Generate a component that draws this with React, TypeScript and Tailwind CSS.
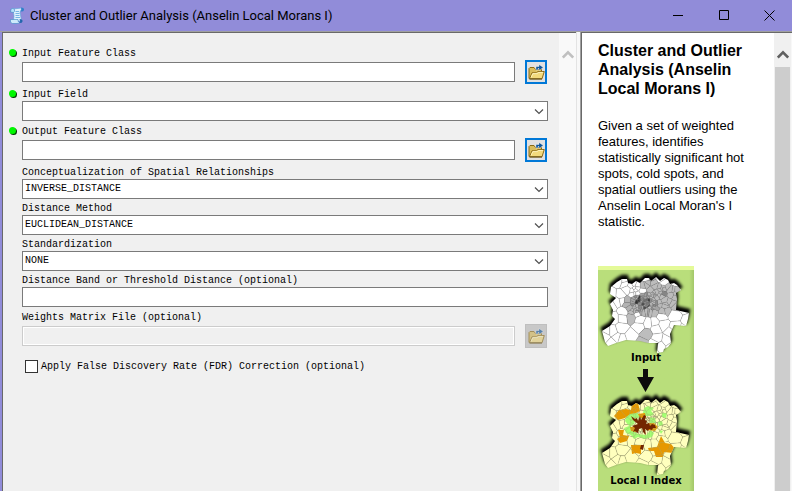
import type { ReactNode } from "react";

type Point = [number, number];

const OUTLINE: Point[] = [
  [13, 21], [19, 16], [24, 13], [29, 13], [30, 17], [34, 18], [38, 15], [42, 17], [47, 12], [51, 12], [53, 15], [58, 11],
  [62, 15], [66, 12], [70, 14], [72, 18], [76, 17], [79, 19], [83, 24], [78, 27], [79, 33], [78, 44], [91, 47],
  [90, 53], [88, 60], [76, 59], [72, 68], [73, 77], [70, 81], [66, 83], [65, 86], [59, 87], [60, 77], [50, 77],
  [42, 75], [28, 74], [18, 77], [10, 80], [7, 76], [4, 65], [12, 60], [17, 53], [14, 50], [15, 44], [12, 38],
  [18, 32], [12, 28],
];

const toPoints = (poly: Point[]) => poly.map(([x, y]) => `${x.toFixed(1)},${y.toFixed(1)}`).join(" ");

function makeSeeds(): Point[] {
  let state = 29;
  const random = () => {
    state = (state * 16807) % 2147483647;
    return state / 2147483647;
  };
  const seeds: Point[] = [];
  for (let y = 12; y < 88; y += 9) {
    for (let x = 2; x < 92; x += 10) seeds.push([x + random() * 10, y + random() * 9]);
  }
  for (let i = 0; i < 60; i++) seeds.push([26 + random() * 52, 16 + random() * 32]);
  for (let i = 0; i < 60; i++) seeds.push([35 + random() * 22, 27 + random() * 19]);
  return seeds;
}

function makeCell(seed: Point, seeds: Point[]): Point[] {
  let poly: Point[] = [[0, 8], [96, 8], [96, 90], [0, 90]];
  for (const other of seeds) {
    if (other === seed) continue;
    const nx = other[0] - seed[0];
    const ny = other[1] - seed[1];
    const limit = (nx * (other[0] + seed[0]) + ny * (other[1] + seed[1])) / 2;
    const side = (p: Point) => p[0] * nx + p[1] * ny - limit;
    const next: Point[] = [];
    poly.forEach((a, i) => {
      const b = poly[(i + 1) % poly.length];
      const sa = side(a);
      const sb = side(b);
      if (sa <= 0) next.push(a);
      if (sa * sb < 0) {
        const t = sa / (sa - sb);
        next.push([a[0] + t * (b[0] - a[0]), a[1] + t * (b[1] - a[1])]);
      }
    });
    poly = next;
  }
  return poly;
}

const SEEDS = makeSeeds();
const CELLS = SEEDS.map((seed) => ({ seed, points: toPoints(makeCell(seed, SEEDS)) }));

const inside = ([x, y]: Point, cx: number, cy: number, rx: number, ry: number) =>
  ((x - cx) / rx) ** 2 + ((y - cy) / ry) ** 2 < 1;

function grayFill(p: Point, i: number) {
  if (inside(p, 45, 37, 7, 7)) return ["#4d4d4d", "#8a8a8a", "#6b6b6b", "#a3a3a3", "#333333"][i % 5];
  if (inside(p, 47, 38, 15, 10)) return ["#a3a3a3", "#8c8c8c", "#b8b8b8", "#bcbcbc"][i % 4];
  if (inside(p, 67, 27, 3, 3)) return "#858585";
  if (inside(p, 33, 37, 7, 7)) return "#b3b3b3";
  if (inside(p, 55, 21, 10, 10) || inside(p, 69, 33, 12, 14)) return "#bcbcbc";
  if (inside(p, 32, 53, 7, 9) || inside(p, 46, 69, 6, 9)) return "#bdbdbd";
  return "#ffffff";
}

const HOT = [
  "M16 28 L21 22 L28 21 L33 22 L34 16 L40 15 L42 23 L38 25 L32 26 L27 30 L20 32Z",
  "M20 42 L26 42 L25 47 L31 48 L29 53 L22 55 L19 51 L22 49Z",
  "M33 57 L43 57 L43 66 L38 65 L34 66Z",
  "M50 60 L59 59 L63 48 L67 55 L73 56 L78 62 L75 65 L66 64 L65 69 L58 69 L56 63 L51 63Z",
];
const COOL = [
  "M29 27 L34 24 L40 25 L42 29 L38 31 L36 36 L33 38 L35 43 L40 46 L48 47 L53 42 L56 45 L54 49 L47 51 L40 49 L36 51 L33 47 L28 45 L26 40 L31 38 L27 33Z",
  "M46 20 L50 18 L56 20 L53 23 L56 26 L53 28 L47 28 L45 25Z",
  "M64 25 L69 25 L68 30 L64 29Z M60 34 L64 33 L65 37 L61 38Z M61 42 L65 43 L63 46Z M52 29 L57 30 L58 35 L52 35Z",
];
const WARM = "M40 26 L47 25 L48 30 L42 30Z M50 35 L56 35 L60 39 L57 43 L50 42Z M32 39 L40 39 L38 44 L33 43Z";
const CORE =
  "M33 28 L37 31 L39 30 L40 33 L42 28 L43 32 L46 27 L48 28 L47 32 L49 33 L48 36 L51 35 L52 38 L54 36 L57 37 L58 40 L55 40 L54 42 L51 41 L50 43 L47 41 L48 47 L45 44 L44 40 L41 41 L40 45 L37 43 L35 44 L37 40 L34 38 L40 36 L35 32Z M43 57 L46 57 L45 62 L42 61Z";

function RegionMap({ id, kind }: { id: string; kind: "input" | "index" }) {
  const input = kind === "input";
  return (
    <svg className="block h-[90px] w-24 overflow-visible" viewBox="0 0 96 90" aria-hidden="true">
      <defs>
        <clipPath id={id}>
          <polygon points={toPoints(OUTLINE)} />
        </clipPath>
        <filter id={`${id}-shadow`} x="-10%" y="-10%" width="120%" height="120%">
          <feGaussianBlur stdDeviation="1.6" />
        </filter>
      </defs>
      <polygon
        points={toPoints(OUTLINE)}
        transform="translate(0 -3)"
        fill="#000"
        stroke="#000"
        strokeWidth="2.5"
        filter={`url(#${id}-shadow)`}
      />
      <g clipPath={`url(#${id})`}>
        {CELLS.map((cell, i) => (
          <polygon key={i} points={cell.points} fill={input ? grayFill(cell.seed, i) : "#ffffbe"} />
        ))}
        {!input && COOL.map((d) => <path key={d} d={d} fill="#a3ff73" />)}
        {!input && HOT.map((d) => <path key={d} d={d} fill="#e69800" />)}
        {!input && <path d={WARM} fill="#e69800" />}
        {CELLS.map((cell, i) => (
          <polygon
            key={i}
            points={cell.points}
            fill="none"
            stroke={input ? "#9c9c9c" : "#a8a878"}
            strokeWidth="0.4"
            strokeOpacity="0.5"
          />
        ))}
        {!input && <path d={CORE} fill="#732600" />}
      </g>
    </svg>
  );
}

function ScrollIcon() {
  return (
    <svg className="h-[17px] w-4 shrink-0" viewBox="0 0 16 17" aria-hidden="true">
      <path d="M4 2 L13 1 L11 5 L12.500 14 H4.500 L5 9Z" fill="#dff1fd" stroke="#5aa3d8" strokeWidth=".6" />
      <path d="M2 2 Q4 .5 5.500 2.500 Q6 4.500 4.500 5.500 L1.500 5Z" fill="#b5e0fa" stroke="#3d86c4" strokeWidth=".6" />
      <path d="M12 .5 Q15.500 .5 15 3 Q14.500 5 11.500 4.500 Q13 3 12 .5Z" fill="#2f80c8" />
      <path d="M1.500 12.500 H9 Q8.500 15 11 15.500 Q10 16.500 8 16.500 H3.500 Q.5 16 1.500 12.500Z" fill="#cdeafb" stroke="#3d86c4" strokeWidth=".6" />
      <path d="M10.500 12 Q14 12 13.500 14.500 Q13 16.500 10 16 Q12 15 10.500 12Z" fill="#2266ad" />
      <path d="M6.500 4.500 H10 M6.500 6.500 H10.500 M6.500 8.500 H10.500 M6.500 10.500 H11" stroke="#6aade0" strokeWidth=".9" />
    </svg>
  );
}

function FolderIcon() {
  return (
    <svg className="h-4 w-[17px] shrink-0" viewBox="0 0 17 16" aria-hidden="true">
      <path d="M1 14.500 V4.500 L2 3.500 H6 L7.500 5.500 H13.500 V8" fill="#d9bd5c" stroke="#8a6a14" />
      <path d="M1.500 14.800 L4 8.800 H8.500 L10 7.500 H16.300 L14 14.800Z" fill="#f2da7c" stroke="#8a6a14" />
      <path d="M3 13.500 L4.800 9.600 H9 L10.500 8.400 H15" fill="none" stroke="#fff6c4" strokeWidth=".9" />
      <path d="M1.500 15 H14" stroke="#5f480c" />
      <path d="M8 6 V2.500 H11 V.4 L15.300 3.500 L11 6.600 V4.500 H10 V6Z" fill="#0f5597" stroke="#fff" strokeWidth=".4" />
    </svg>
  );
}

function ChevronUp({ className }: { className: string }) {
  return (
    <svg className={className} viewBox="0 0 12 9" aria-hidden="true">
      <path d="M.8 7.500 L6 2.300 L11.200 7.500" fill="none" stroke="currentColor" strokeWidth="2.600" />
    </svg>
  );
}

function Field({ id, label, required, children }: { id: string; label: string; required?: boolean; children: ReactNode }) {
  return (
    <div className="grid grid-cols-[13px_minmax(0,1fr)]">
      <div className="flex items-center">
        {required && (
          <svg className="h-2 w-2" viewBox="0 0 8 8" aria-hidden="true">
            <circle cx="4.500" cy="4.500" r="3.500" fill="#003800" />
            <circle cx="3.500" cy="3.500" r="3.500" fill="#00f800" />
          </svg>
        )}
      </div>
      <label htmlFor={id} className="h-3.5 leading-4">
        {label}
      </label>
      <div className="col-start-2">{children}</div>
    </div>
  );
}

function BrowseField({ id, label, required, disabled }: { id: string; label: string; required?: boolean; disabled?: boolean }) {
  return (
    <div className="py-px">
      <Field id={id} label={label} required={required}>
        <div className="flex items-center gap-2.5 pr-px">
          <input
            id={id}
            type="text"
            disabled={disabled}
            className="h-5 min-w-0 flex-1 border border-[#7a7a7a] bg-white px-0.5 outline-none disabled:border-[#cccccc] disabled:bg-[#f0f0f0] disabled:shadow-[inset_0_0_0_1px_#fff]"
          />
          <button
            type="button"
            disabled={disabled}
            aria-label={`Browse ${label}`}
            className="flex h-6 w-[22px] shrink-0 items-center justify-center border-2 border-[#0078d7] bg-[#e1e1e1] disabled:border disabled:border-[#bfbfbf] disabled:bg-[#c8c8c8] disabled:[&>svg]:opacity-60"
          >
            <FolderIcon />
          </button>
        </div>
      </Field>
    </div>
  );
}

function SelectField({ id, label, required, value }: { id: string; label: string; required?: boolean; value: string }) {
  return (
    <Field id={id} label={label} required={required}>
      <div className="relative">
        <select
          id={id}
          defaultValue={value}
          className="block h-5 w-full appearance-none border border-[#7a7a7a] bg-white pr-5 pb-px pl-0.5 outline-none"
        >
          <option value={value}>{value}</option>
        </select>
        <svg className="pointer-events-none absolute top-1.5 right-1 h-2 w-2.5" viewBox="0 0 10 8" aria-hidden="true">
          <path d="M1 2.500 L5 6.500 L9 2.500" fill="none" stroke="#505050" strokeWidth="1.200" />
        </svg>
      </div>
    </Field>
  );
}

export default function App() {
  return (
    <div className="flex h-screen flex-col overflow-hidden bg-[#918cd9] text-black">
      <header className="flex h-[31px] shrink-0 items-center pl-[9px]">
        <ScrollIcon />
        <h1 className="flex-1 pl-[5px] font-[Roboto,sans-serif] text-[13px] leading-5">
          Cluster and Outlier Analysis (Anselin Local Morans I)
        </h1>
        <button type="button" aria-label="Minimize" className="flex h-full w-[46px] items-center justify-center">
          <svg className="h-[11px] w-[11px]" viewBox="0 0 11 11"><path d="M1 5.500 H11" stroke="#000" /></svg>
        </button>
        <button type="button" aria-label="Maximize" className="flex h-full w-[46px] items-center justify-center">
          <svg className="h-[11px] w-[11px]" viewBox="0 0 11 11"><path d="M1.500 .5 H10.500 V9.500 H1.500Z" fill="none" stroke="#000" /></svg>
        </button>
        <button type="button" aria-label="Close" className="flex h-full w-[46px] items-center justify-center">
          <svg className="h-[11px] w-[11px]" viewBox="0 0 11 11"><path d="M.5 .5 L10.500 10.500 M10.500 .5 L.5 10.500" stroke="#000" /></svg>
        </button>
      </header>

      <div className="flex min-h-0 flex-1 border-t border-[#a0a0a0] pl-0.5">
        <main className="flex min-w-0 flex-1 border-t border-l border-[#696969] bg-[#f0f0f0]">
          <form className="flex min-w-0 flex-1 flex-col gap-0.5 pt-3 pr-[11px] pl-1.5 font-['Liberation_Mono',monospace] text-[10px]">
            <BrowseField id="input-features" label="Input Feature Class" required />
            <SelectField id="input-field" label="Input Field" required value="" />
            <BrowseField id="output-features" label="Output Feature Class" required />
            <SelectField id="concept" label="Conceptualization of Spatial Relationships" value="INVERSE_DISTANCE" />
            <SelectField id="method" label="Distance Method" value="EUCLIDEAN_DISTANCE" />
            <SelectField id="standardization" label="Standardization" value="NONE" />
            <Field id="band" label="Distance Band or Threshold Distance (optional)">
              <input id="band" type="text" className="block h-5 w-full border border-[#7a7a7a] bg-white px-0.5 outline-none" />
            </Field>
            <BrowseField id="weights" label="Weights Matrix File (optional)" disabled />
            <label className="flex items-center gap-[3px] pt-2 pl-4">
              <input type="checkbox" className="h-[13px] w-[13px] appearance-none border border-[#333333] bg-white" />
              Apply False Discovery Rate (FDR) Correction (optional)
            </label>
          </form>
          <div className="flex w-[17px] shrink-0 justify-center bg-[#f9f9f9] pt-[17px] text-[#c0c0c0]">
            <ChevronUp className="h-[9px] w-3" />
          </div>
        </main>

        <div className="w-[5px] shrink-0 border-r border-l border-r-[#a0a0a0] border-l-[#e3e3e3] bg-[#f8f8f8]" />

        <aside className="flex w-[211px] shrink-0 border-t border-l border-[#696969] bg-white font-['Liberation_Sans',Arial,sans-serif]">
          <div className="min-w-0 flex-1 overflow-hidden pt-2 pr-4 pl-4">
            <h2 className="text-base leading-[19px] font-bold">Cluster and Outlier Analysis (Anselin Local Morans I)</h2>
            <p className="mt-5 text-[13px] leading-4">
              Given a set of weighted features, identifies statistically significant hot spots, cold spots, and spatial
              outliers using the Anselin Local Moran's I statistic.
            </p>
            <figure className="mt-9 flex h-[360px] w-24 flex-col items-center border-t-4 border-t-[#e4fa98] bg-linear-to-r from-[#b9de7b] from-95% to-[#a3c76a] font-['DejaVu_Sans',Verdana,sans-serif] text-[10px] leading-3 font-bold">
              <div className="-mt-1 h-[86px]">
                <RegionMap id="input-map" kind="input" />
              </div>
              <span>Input</span>
              <svg className="mt-1 h-6 w-5" viewBox="0 0 20 24" aria-hidden="true">
                <path d="M7 1 H12 V9 H18 L9.500 24 L1 9 H7Z" fill="#0c0c0c" />
              </svg>
              <div className="-mt-1 h-[87px]">
                <RegionMap id="index-map" kind="index" />
              </div>
              <span>Local I Index</span>
            </figure>
          </div>
          <div className="flex w-[17px] shrink-0 flex-col bg-[#f0f0f0] px-px">
            <button type="button" aria-label="Scroll up" className="flex h-[34px] shrink-0 items-center justify-center pt-2 text-[#606060]">
              <ChevronUp className="h-[9px] w-3" />
            </button>
            <div className="flex-1 bg-[#cdcdcd]" />
          </div>
          <div className="w-px bg-[#f8f8f8]" />
        </aside>
      </div>
    </div>
  );
}
